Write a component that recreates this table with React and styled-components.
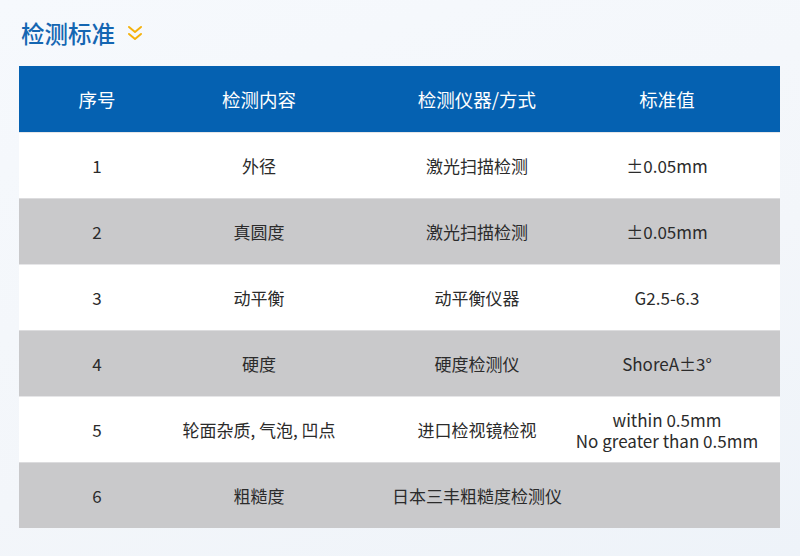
import React from 'react';
import styled, { createGlobalStyle } from 'styled-components';

const GlobalStyle = createGlobalStyle`
  html, body {
    margin: 0;
    padding: 0;
  }
  body {
    font-family: "Noto Sans CJK SC", "Noto Sans", sans-serif;
    background: #f4f7fb;
  }
`;

const Page = styled.div`
  width: 800px;
  height: 556px;
  box-sizing: border-box;
  padding: 18px 20px 0 19px;
  background: linear-gradient(160deg, #f6f9fd 0%, #f3f6fa 60%, #eef3f9 100%);
  overflow: hidden;
`;

const TitleBar = styled.div`
  display: flex;
  align-items: center;
  gap: 12px;
  height: 30px;
  padding-left: 2px;
  margin-bottom: 18px;
`;

const Title = styled.h2`
  margin: 0;
  font-size: 23.5px;
  font-weight: 500;
  color: #1466b2;
`;

const Table = styled.div`
  display: grid;
  grid-template-columns: 156px 168px 268px 169px;
  width: 761px;
`;

const Cell = styled.div`
  height: 66px;
  display: flex;
  flex-direction: column;
  align-items: center;
  justify-content: center;
  box-sizing: border-box;
  padding-right: ${p => (p.$last ? '57px' : '0')};
  white-space: nowrap;
  font-size: ${p => (p.$head ? '18.5px' : '17px')};
  line-height: 21px;
  color: ${p => (p.$head ? '#ffffff' : '#2b2b2b')};
  background: ${p => (p.$head ? '#0561b1' : p.$shade ? '#c9c9cb' : '#ffffff')};
  border-top: ${p => (p.$head ? 'none' : `1px solid ${p.$shade ? '#dcdcde' : '#e6e6e8'}`)};
`;

const Chevrons = () => (
  <svg width="16" height="18" viewBox="0 0 16 18" fill="none" stroke="#f5b20c" strokeWidth="2" strokeLinecap="round" strokeLinejoin="round">
    <polyline points="2,3 8,8 14,3" />
    <polyline points="2,10 8,15 14,10" />
  </svg>
);

const head = ['序号', '检测内容', '检测仪器/方式', '标准值'];

const rows = [
  ['1', '外径', '激光扫描检测', ['±0.05mm']],
  ['2', '真圆度', '激光扫描检测', ['±0.05mm']],
  ['3', '动平衡', '动平衡仪器', ['G2.5-6.3']],
  ['4', '硬度', '硬度检测仪', ['ShoreA±3°']],
  ['5', '轮面杂质, 气泡, 凹点', '进口检视镜检视', ['within 0.5mm', 'No greater than 0.5mm']],
  ['6', '粗糙度', '日本三丰粗糙度检测仪', []],
];

export default function App() {
  return (
    <>
      <GlobalStyle />
      <Page>
        <TitleBar>
          <Title>检测标准</Title>
          <Chevrons />
        </TitleBar>
        <Table>
          {head.map((h, i) => (
            <Cell key={h} $head $last={i === 3}>{h}</Cell>
          ))}
          {rows.map((r, ri) => {
            const shade = ri % 2 === 1;
            return (
              <React.Fragment key={r[0]}>
                <Cell $shade={shade}>{r[0]}</Cell>
                <Cell $shade={shade}>{r[1]}</Cell>
                <Cell $shade={shade}>{r[2]}</Cell>
                <Cell $shade={shade} $last>
                  {r[3].map(line => (
                    <span key={line}>{line}</span>
                  ))}
                </Cell>
              </React.Fragment>
            );
          })}
        </Table>
      </Page>
    </>
  );
}
